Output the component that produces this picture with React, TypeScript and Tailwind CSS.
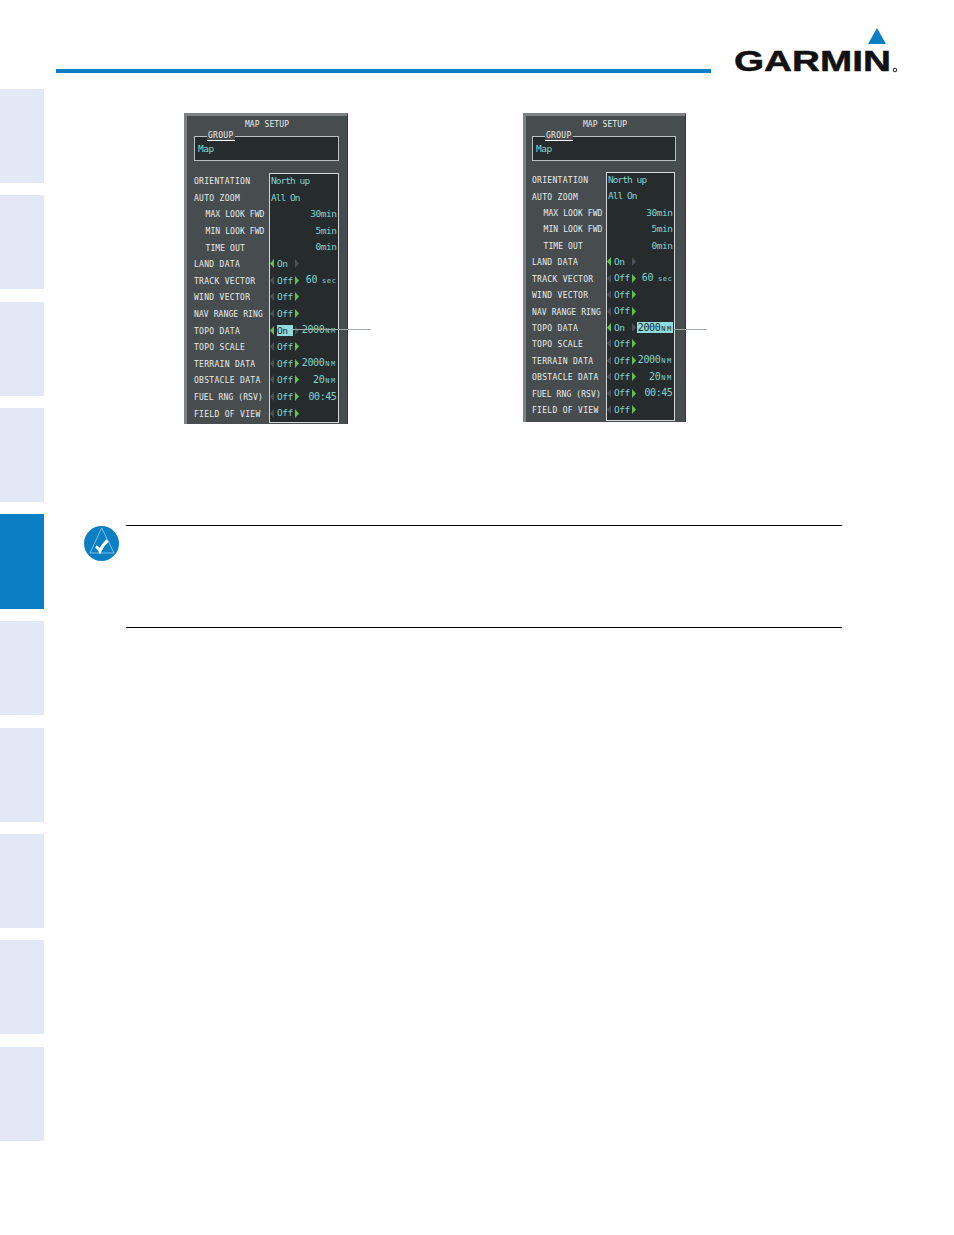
import React from "react";

type Row = { label: string; indent?: boolean };
const labels: Row[] = [
  { label: "ORIENTATION" },
  { label: "AUTO ZOOM" },
  { label: "MAX LOOK FWD", indent: true },
  { label: "MIN LOOK FWD", indent: true },
  { label: "TIME OUT", indent: true },
  { label: "LAND DATA" },
  { label: "TRACK VECTOR" },
  { label: "WIND VECTOR" },
  { label: "NAV RANGE RING" },
  { label: "TOPO DATA" },
  { label: "TOPO SCALE" },
  { label: "TERRAIN DATA" },
  { label: "OBSTACLE DATA" },
  { label: "FUEL RNG (RSV)" },
  { label: "FIELD OF VIEW" },
];

function Arrow({ dir, on }: { dir: "l" | "r"; on: boolean }) {
  return (
    <svg width="4" height="9" viewBox="0 0 4 9" className="shrink-0">
      <path d={dir === "l" ? "M4 0 L0 4.5 L4 9 Z" : "M0 0 L4 4.5 L0 9 Z"} fill={on ? "#62c24f" : "#4a5153"} />
    </svg>
  );
}

function Value({ big, small, hi, gap }: { big: string; small?: string; hi?: boolean; gap?: boolean }) {
  return (
    <span
      className={
        hi
          ? "flex items-baseline whitespace-nowrap bg-[#8fdcdc] text-[#20282a] pl-[1px] h-[11px] leading-[11px] text-[10px] tracking-[-0.4px]"
          : "flex items-baseline whitespace-nowrap text-[10px] tracking-[-0.4px]"
      }
    >
      <span>{big}</span>
      {small ? (
        <span className={gap ? "ml-[5px] text-[7px] tracking-[0.6px]" : "ml-[1px] text-[7px] tracking-[1.4px]"}>{small}</span>
      ) : null}
    </span>
  );
}

function Toggle({
  text,
  on,
  value,
  small,
  hiToggle,
  hiValue,
  gap,
}: {
  text: string;
  on?: boolean;
  value?: string;
  small?: string;
  hiToggle?: boolean;
  hiValue?: boolean;
  gap?: boolean;
}) {
  return (
    <div className="flex items-center h-full pr-[1.5px] pb-[3px]">
      <Arrow dir="l" on={!!on} />
      <span className={hiToggle ? "ml-[3px] w-[16px] h-[11px] leading-[11px] bg-[#8fdcdc] text-[#20282a]" : "ml-[3px] w-[16px]"}>{text}</span>
      <span className="ml-[2px]">
        <Arrow dir="r" on={!on} />
      </span>
      {value ? (
        <span className="ml-auto">
          <Value big={value} small={small} hi={hiValue} gap={gap} />
        </span>
      ) : null}
    </div>
  );
}

function Panel({
  rowH,
  h,
  w,
  pl,
  titlePr,
  groupW,
  labelW,
  boxW,
  boxH,
  boxTop,
  hiRight,
  lineLeft,
  lineRight,
}: {
  rowH: string;
  h: string;
  w: string;
  pl: string;
  titlePr: string;
  groupW: string;
  labelW: string;
  boxW: string;
  boxH: string;
  boxTop: string;
  hiRight?: boolean;
  lineLeft: string;
  lineRight: string;
}) {
  return (
    <div className={`relative ${h} ${w} ${pl} shrink-0 bg-[#474c4e] border-t-[3px] border-l-[3px] border-[#7c8183] border-r-[1px] border-r-[#33383a] font-['DejaVu_Sans_Mono',monospace] text-[8px] leading-none text-[#e8ecec]`}>
      <div className={`h-[20px] pt-[5px] text-center ${titlePr} tracking-[0.1px]`}>MAP SETUP</div>
      <div className={`relative ${groupW} h-[25px] bg-[#262b2d] border border-[#b9bebe] text-[#80d6d2] text-[9.5px] pl-[3px] pt-[7px] tracking-[-0.5px]`}>
        Map
        <span className="absolute left-[12px] -top-[6px] bg-[#474c4e] px-[1px] text-[8px] leading-[9px] text-[#e8ecec] border-b border-white tracking-[0.3px]">GROUP</span>
      </div>
      <div className={`flex ${boxTop}`}>
        <div className={`${labelW} pt-[1px]`}>
          {labels.map((r) => (
            <div key={r.label} className={`${rowH} flex items-center whitespace-nowrap tracking-[0.3px] ${r.indent ? "pl-[11.5px]" : ""}`}>
              <span className={r.indent || r.label === "NAV RANGE RING" || r.label === "FUEL RNG (RSV)" ? "tracking-[0.1px]" : ""}>{r.label}</span>
            </div>
          ))}
        </div>
        <div className={`${boxW} ${boxH} bg-[#262b2d] border border-[#d5d8d8] text-[#80d6d2] text-[9.5px] tracking-[-0.45px]`}>
          <div className={`${rowH} flex items-center pl-[1px] pb-[3px] whitespace-nowrap tracking-[-0.95px]`}>North up</div>
          <div className={`${rowH} flex items-center pl-[1px] pb-[3px] whitespace-nowrap tracking-[-0.95px]`}>All On</div>
          <div className={`${rowH} flex items-center justify-end pr-[1.5px] pb-[3px]`}>30min</div>
          <div className={`${rowH} flex items-center justify-end pr-[1.5px] pb-[3px]`}>5min</div>
          <div className={`${rowH} flex items-center justify-end pr-[1.5px] pb-[3px]`}>0min</div>
          <div className={rowH}><Toggle text="On" on /></div>
          <div className={rowH}><Toggle text="Off" value="60" small="sec" gap /></div>
          <div className={rowH}><Toggle text="Off" /></div>
          <div className={rowH}><Toggle text="Off" /></div>
          <div className={rowH}><Toggle text="On" on value="2000" small="NM" hiToggle={!hiRight} hiValue={hiRight} /></div>
          <div className={rowH}><Toggle text="Off" /></div>
          <div className={rowH}><Toggle text="Off" value="2000" small="NM" /></div>
          <div className={rowH}><Toggle text="Off" value="20" small="NM" /></div>
          <div className={rowH}><Toggle text="Off" value="00:45" /></div>
          <div className={rowH}><Toggle text="Off" /></div>
        </div>
      </div>
      <div className={`absolute top-[213px] h-px bg-[#a3a8aa] ${lineLeft} ${lineRight}`} />
    </div>
  );
}

function Logo() {
  return (
    <svg width="164" height="48" viewBox="0 0 164 48" className="shrink-0 overflow-visible">
      <path d="M133 17 L142 1 L151 17 Z" fill="#0a7fc4" />
      <text
        transform="translate(-1 44) scale(1.29 1)"
        fontFamily="'Liberation Sans', sans-serif"
        fontWeight="700"
        fontSize="30"
        fill="#111"
        stroke="#111"
        strokeWidth="0.5"
      >
        GARMIN
      </text>
      <circle cx="160" cy="43" r="1.8" fill="none" stroke="#222" strokeWidth="1" />
    </svg>
  );
}

function NoteIcon() {
  return (
    <svg width="35" height="35" viewBox="0 0 35 35" className="shrink-0">
      <circle cx="17.5" cy="17.5" r="17.5" fill="#0a7fc4" />
      <path d="M17.7 2 L6 27 L30 27 Z" fill="none" stroke="#9fd0ec" strokeWidth="0.8" />
      <path d="M12 20.5 C13.5 21.5 15 23 16 25 C18 20.5 20.5 17 23.5 14.5" fill="none" stroke="#fff" strokeWidth="3" />
    </svg>
  );
}

export default function App() {
  const tabs = Array.from({ length: 10 }, (_, i) => i);
  return (
    <div className="flex w-[954px] h-[1235px] bg-white overflow-hidden">
      <div className="w-[44px] shrink-0 pt-[89px] flex flex-col gap-[12.36px]">
        {tabs.map((i) => (
          <div key={i} className={i === 4 ? "h-[94.5px] bg-[#0a7fc4]" : "h-[94px] bg-[#e3e8f7]"} />
        ))}
      </div>
      <div className="flex-1 min-w-0">
        <div className="flex items-end h-[75px] pl-[12px]">
          <div className="w-[655px] h-[4px] mb-[2px] bg-[#0a7fc4]" />
          <div className="ml-[24px]">
            <Logo />
          </div>
        </div>
        <div className="flex pl-[140px] mt-[38px]">
          <Panel rowH="h-[16.6px]" h="h-[311px]" w="w-[164px]" pl="pl-[7px]" titlePr="pr-[7px]" groupW="w-[145px]" labelW="w-[75px]" boxW="w-[70px]" boxH="h-[249.5px]" boxTop="mt-[12px]" lineLeft="left-[106px]" lineRight="w-[78px]" />
          <div className="w-[175px] shrink-0" />
          <Panel rowH="h-[16.43px]" h="h-[309px]" w="w-[163px]" pl="pl-[6px]" titlePr="pr-[7px]" groupW="w-[144px]" labelW="w-[74px]" boxW="w-[69px]" boxH="h-[248.5px]" boxTop="mt-[11px]" hiRight lineLeft="left-[148px]" lineRight="w-[33px]" />
        </div>
        <div className="flex mt-[101px] pl-[40px]">
          <div className="pt-[1px] w-[42px]">
            <NoteIcon />
          </div>
          <div className="w-[716px] h-[103px] border-t border-b border-black" />
        </div>
      </div>
    </div>
  );
}
